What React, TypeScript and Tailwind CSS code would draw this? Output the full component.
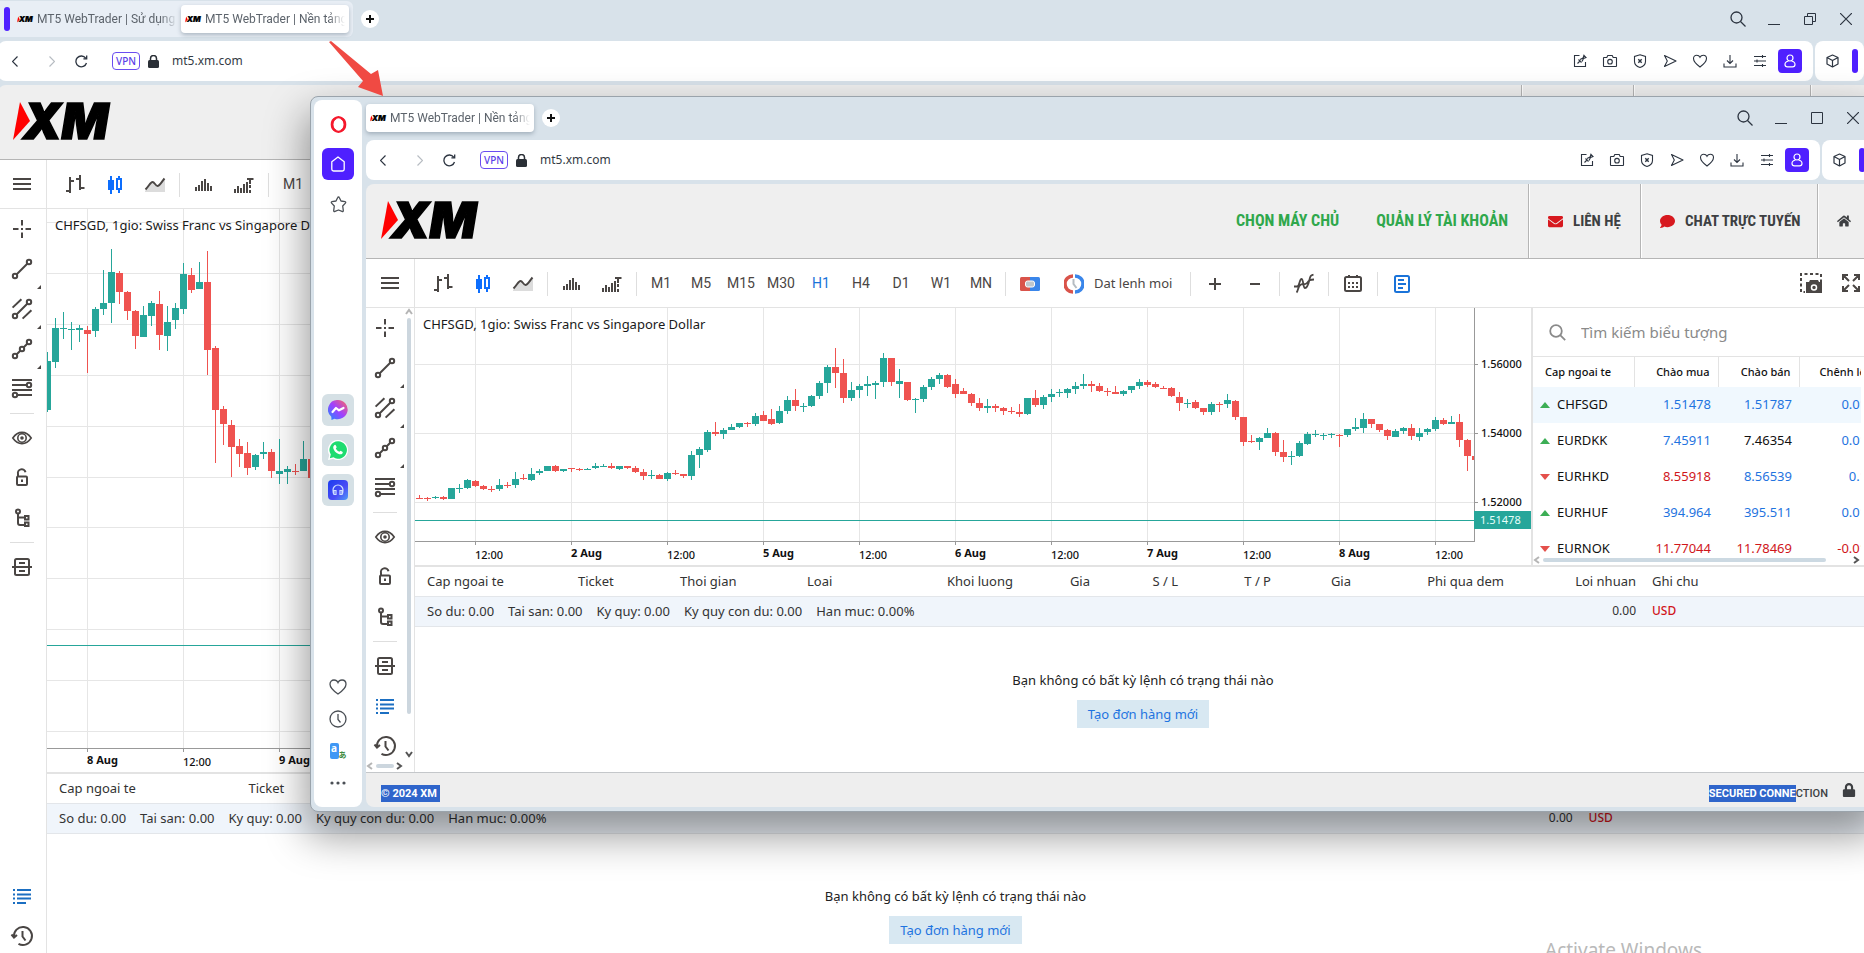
import React from "react";
import { FaEnvelope, FaComment, FaHome, FaLock } from "react-icons/fa";

type Candle = [number, number, number, number, number];

const UP = 1;

/* direction, high, body top, body bottom, low — in thirds of a pixel */
const wideCandles: Candle[] = [
  [0,495,503,507,507],[0,501,503,507,513],[1,497,501,504,507],[0,498,501,507,510],[1,474,474,507,507],[1,462,474,477,489],
  [1,447,450,474,477],[0,450,453,468,471],[0,465,468,477,480],[0,468,477,480,486],[1,447,465,477,483],[0,456,465,468,474],
  [1,426,447,465,474],[0,432,444,447,450],[1,414,432,450,453],[1,417,423,429,435],[1,408,408,423,423],[0,405,408,423,426],
  [1,417,417,423,426],[0,414,414,417,426],[0,414,417,420,423],[1,414,417,420,420],[1,399,408,414,417],[1,402,408,411,411],
  [0,399,408,414,417],[1,408,408,417,420],[0,408,408,414,417],[0,408,414,426,429],[0,417,426,438,450],[1,420,435,438,447],
  [0,432,435,447,447],[1,426,429,447,453],[0,420,429,432,435],[0,432,432,438,444],[1,363,375,438,450],[1,351,357,375,414],
  [1,300,306,360,366],[0,276,306,312,318],[1,294,300,312,327],[1,282,291,300,300],[1,279,279,291,294],[0,276,279,282,291],
  [1,249,258,282,288],[0,243,255,273,273],[0,237,267,282,285],[1,228,243,279,282],[1,198,210,243,252],[0,177,210,228,243],
  [1,219,228,231,246],[1,195,198,228,231],[1,153,159,198,207],[1,105,111,159,189],[0,54,111,129,174],[0,87,129,204,219],
  [1,156,180,204,213],[1,162,168,180,204],[1,138,162,168,198],[1,153,159,165,207],[1,69,84,156,171],[0,84,84,156,168],
  [1,117,153,162,204],[0,156,156,210,213],[1,204,207,210,249],[1,165,171,207,216],[1,141,147,171,180],[1,129,135,147,162],
  [0,132,135,171,174],[0,147,162,192,204],[0,174,183,192,192],[0,189,192,219,228],[0,204,219,234,243],[1,207,228,234,249],
  [0,222,228,234,246],[0,231,234,243,255],[0,231,243,246,252],[0,222,246,252,261],[1,204,204,252,255],[0,180,204,225,231],
  [1,195,201,225,237],[1,177,192,201,216],[1,177,186,189,201],[1,174,177,189,204],[1,156,168,177,192],[1,132,162,168,177],
  [0,153,162,168,186],[0,159,168,183,186],[0,174,183,186,198],[0,168,186,192,192],[1,180,183,192,198],[1,168,168,180,189],
  [1,147,156,168,177],[0,150,156,165,171],[0,156,162,171,174],[0,168,174,177,177],[0,171,174,198,201],[0,186,201,219,243],
  [1,207,219,222,234],[0,210,216,234,237],[0,234,234,246,255],[1,216,222,246,255],[0,216,222,225,246],[1,192,210,222,234],
  [0,210,213,261,270],[0,261,261,336,348],[0,315,333,336,339],[1,321,324,336,360],[1,294,309,324,324],[0,306,309,366,378],
  [0,330,366,381,396],[1,363,378,381,405],[1,333,339,378,381],[1,306,312,342,345],[1,300,312,315,321],[1,309,315,318,330],
  [1,309,312,315,324],[0,312,315,318,351],[1,297,297,315,321],[1,264,291,297,303],[1,249,267,294,309],[0,267,267,282,294],
  [0,282,282,300,306],[0,297,300,318,330],[1,297,303,321,321],[1,291,294,303,312],[0,282,294,318,330],[1,294,309,321,333],
  [1,294,297,306,315],[1,261,270,297,303],[0,264,270,282,285],[1,258,276,282,282],[0,252,276,330,351],[0,327,330,378,423],
  [0,378,378,390,390],
];

const tallCandles: Candle[] = [
  [1,576,603,750,756],[1,474,504,606,624],[1,456,504,507,537],[1,486,507,510,570],[1,495,504,510,546],[0,498,510,522,639],
  [1,441,447,513,531],[1,330,429,447,465],[1,267,336,429,489],[0,333,339,396,432],[0,393,396,453,480],[0,450,453,528,567],
  [1,438,465,531,531],[1,423,429,468,498],[0,393,432,525,570],[1,438,486,528,573],[1,429,444,480,507],[1,309,342,447,462],
  [0,324,345,390,399],[1,306,366,387,387],[0,273,366,570,645],[0,558,564,750,909],[0,738,747,792,855],[0,780,795,861,951],
  [0,837,858,882,921],[0,846,879,924,945],[1,882,885,921,930],[1,846,876,882,897],[0,867,876,933,954],[1,837,933,942,972],
  [1,918,927,936,972],[0,912,933,936,945],[1,843,897,933,933],[0,897,897,954,954],
];

interface ChartSpec {
  candles: Candle[];
  firstX: number;
  offsetY: number;
  gridX: { x: number; label: string }[];
  gridY: { y: number; label?: string }[];
  priceY: number;
  axisY: number;
}

const wideChart: ChartSpec = {
  candles: wideCandles,
  firstX: 4,
  offsetY: 22,
  gridX: ["12:00", "2 Aug", "12:00", "5 Aug", "12:00", "6 Aug", "12:00", "7 Aug", "12:00", "8 Aug", "12:00"].map(
    (label, i) => ({ x: 60 + 96 * i, label })
  ),
  gridY: [
    { y: 56, label: "1.56000" },
    { y: 125, label: "1.54000" },
    { y: 194, label: "1.52000" },
  ],
  priceY: 212,
  axisY: 233,
};

const tallChart: ChartSpec = {
  candles: tallCandles,
  firstX: 0,
  offsetY: -49,
  gridX: ["8 Aug", "12:00", "9 Aug"].map((label, i) => ({ x: 40 + 96 * i, label })),
  gridY: [13, 64, 115, 166, 217, 268, 318, 369, 420, 471, 522].map((y) => ({ y })),
  priceY: 436,
  axisY: 539,
};

function PriceChart({ spec }: { spec: ChartSpec }) {
  const { candles, firstX, offsetY, gridX, gridY, priceY, axisY } = spec;
  return (
    <svg className="block h-full w-full" shapeRendering="crispEdges" role="img" aria-label="CHFSGD">
      {gridX.map(({ x }) => (
        <rect key={x} x={x} y={0} width={1} height={axisY} fill="#e6e6e6" />
      ))}
      {gridY.map(({ y }) => (
        <rect key={y} x={0} y={y} width="100%" height={1} fill="#e6e6e6" />
      ))}
      {candles.map(([dir, high, top, bottom, low], i) => {
        const x = firstX + i * 8;
        const px = (v: number) => Math.round(v / 3) + offsetY;
        return (
          <g key={i} fill={dir === UP ? "#26a69a" : "#ef5350"}>
            <rect x={x} y={px(high)} width={1} height={Math.max(1, px(low) - px(high))} />
            <rect x={x - 3} y={px(top)} width={7} height={Math.max(1, px(bottom) - px(top))} />
          </g>
        );
      })}
      <rect x={0} y={priceY} width="100%" height={1} fill="#26a69a" />
      <svg x="100%" overflow="visible">
        <rect x={-56} y={0} width={56} height={axisY + 30} fill="#fff" />
        <rect x={-57} y={0} width={1} height={axisY} fill="#999" />
        {gridY.map(({ y, label }) =>
          label ? (
            <g key={y}>
              <rect x={-56} y={y} width={3} height={1} fill="#999" />
              <text x={-50} y={y + 4} fontSize={11} fontWeight={500} fill="#111">
                {label}
              </text>
            </g>
          ) : null
        )}
        <rect x={-57} y={priceY - 9} width={57} height={18} fill="#26a69a" />
        <text x={-51} y={priceY + 4} fontSize={11} fill="#e6fffb">
          1.51478
        </text>
      </svg>
      <rect x={0} y={axisY} width="100%" height={1} fill="#999" />
      <svg x="100%" overflow="visible">
        <rect x={-56} y={axisY} width={56} height={1} fill="#fff" />
      </svg>
      {gridX.map(({ x, label }) => (
        <g key={x}>
          <rect x={x} y={axisY} width={1} height={4} fill="#999" />
          <text
            x={x}
            y={label.includes("Aug") ? axisY + 16 : axisY + 18}
            fontSize={11}
            fontWeight={label.includes("Aug") ? 700 : 500}
            fill="#111"
          >
            {label}
          </text>
        </g>
      ))}
      <text x={8} y={21} fontSize={13} fill="#1a1a1a">
        CHFSGD, 1gio: Swiss Franc vs Singapore Dollar
      </text>
    </svg>
  );
}

/* ---------- drawings ---------- */

function Ico({
  children,
  size = 20,
  w = 2,
  c = "#4a4644",
}: {
  children: React.ReactNode;
  size?: number;
  w?: number;
  c?: string;
}) {
  return (
    <svg
      width={size}
      height={size}
      viewBox="0 0 20 20"
      fill="none"
      stroke={c}
      strokeWidth={w}
      overflow="visible"
      className="shrink-0"
    >
      {children}
    </svg>
  );
}

function XmLogo({ small = false }: { small?: boolean }) {
  return (
    <svg
      width={small ? 16 : 98}
      height={small ? 7 : 40}
      viewBox="0 0 98 40"
      overflow="visible"
      className="shrink-0"
      role="img"
      aria-label="XM"
    >
      <polygon points="7,1 17,20 0,39" fill="#ff0000" />
      <text
        x="10"
        y="38"
        fontSize="49"
        fontWeight="900"
        fontStyle="italic"
        fontFamily="Inter, sans-serif"
        fill="#000"
        stroke="#000"
        strokeWidth="1.5"
      >
        XM
      </text>
    </svg>
  );
}

const BLUE = "#1b6fc2";

const toolTop: { name: string; more?: boolean; art: React.ReactNode }[] = [
  {
    name: "Crosshair",
    art: (
      <Ico>
        <path d="M10 1v5.500M10 13.500V19M1 10h5.500M13.500 10H19" />
        <path d="M9 10h2" />
      </Ico>
    ),
  },
  {
    name: "Line",
    more: true,
    art: (
      <Ico>
        <circle cx="3" cy="17" r="2.2" />
        <circle cx="17" cy="3" r="2.2" />
        <path d="M4.5 15.5l11-11" />
      </Ico>
    ),
  },
  {
    name: "Channel",
    more: true,
    art: (
      <Ico>
        <circle cx="3" cy="17" r="2.2" />
        <circle cx="17" cy="3" r="2.2" />
        <path d="M4.5 15.5l11-11M.6 8.6l8.8-8.4M10.6 19.6l8.8-8.4" />
      </Ico>
    ),
  },
  {
    name: "Polyline",
    more: true,
    art: (
      <Ico>
        <circle cx="3" cy="17" r="2.2" />
        <circle cx="10" cy="10" r="2.2" />
        <circle cx="17" cy="3" r="2.2" />
        <path d="M4.5 15.5l4-4M11.5 8.5l4-4" />
      </Ico>
    ),
  },
  {
    name: "Fibonacci",
    art: (
      <Ico>
        <path d="M0 1h20M0 6h15M0 11h20M5 16h15" />
        <circle cx="17" cy="6" r="2.2" />
        <circle cx="3" cy="16" r="2.2" />
      </Ico>
    ),
  },
];

const toolMid: { name: string; art: React.ReactNode }[] = [
  {
    name: "Visibility",
    art: (
      <Ico w={1.6}>
        <path d="M.8 10C4 5.4 7 4.4 10 4.4s6 1 9.2 5.6C16 14.6 13 15.6 10 15.6S4 14.6.8 10z" />
        <circle cx="10" cy="10" r="4.2" />
        <circle cx="10" cy="10" r="1" fill="#4a4644" />
      </Ico>
    ),
  },
  {
    name: "Lock",
    art: (
      <Ico>
        <rect x="5" y="8.5" width="10" height="8.5" rx="1" />
        <path d="M6 8.5V6a3.5 3.5 0 0 1 7.5-1.8M10 11.5v2.5" />
      </Ico>
    ),
  },
  {
    name: "Objects",
    art: (
      <Ico>
        <circle cx="6" cy="3.5" r="2" />
        <path d="M6 5.5V15a2 2 0 0 0 2 2h5M6 9.500h7" />
        <rect x="13" y="8" width="3.5" height="3.5" />
        <rect x="13" y="14.5" width="3.5" height="3.5" />
      </Ico>
    ),
  },
];

const templateArt = (
  <Ico>
    <rect x="3" y="2" width="14" height="16" rx="1.5" />
    <path d="M0 10h20M7 6h6M7 14h6" />
  </Ico>
);

const listArt = (
  <Ico c={BLUE}>
    <path d="M1 4h2M1 8.5h2M1 12.5h2M1 17h2M5 4h14M5 8.5h14M5 12.5h14M5 17h9" />
  </Ico>
);

const historyArt = (
  <Ico>
    <path d="M2 11A9 9 0 1 1 6.5 17.8M10.5 5v5.5l3 4" />
    <path d="M-.5 8.5L2 11.5l3-2.5" />
  </Ico>
);

function ToolButton({ name, more, children }: { name: string; more?: boolean; children: React.ReactNode }) {
  return (
    <button type="button" aria-label={name} className="relative flex h-10 w-[38px] shrink-0 items-center justify-center">
      {children}
      {more && (
        <svg width="4" height="4" viewBox="0 0 4 4" className="absolute right-0 bottom-0">
          <polygon points="4,0 4,4 0,4" fill="#4a4644" />
        </svg>
      )}
    </button>
  );
}

function Rule() {
  return <div className="mx-auto my-1 h-px w-6 shrink-0 bg-[#dedede]" />;
}

function Chevron({ dir, faint = false }: { dir: "up" | "down" | "left" | "right"; faint?: boolean }) {
  const d = { up: "M1 6l3-4 3 4", down: "M1 2l3 4 3-4", left: "M6 1L2 4l4 3", right: "M2 1l4 3-4 3" }[dir];
  return (
    <svg width="8" height="8" viewBox="0 0 8 8" fill="none" stroke={faint ? "#b5b5b5" : "#555"} strokeWidth="2" className="shrink-0">
      <path d={d} />
    </svg>
  );
}

/* ---------- browser chrome ---------- */

function Tab({ title, active = false }: { title: string; active?: boolean }) {
  return (
    <button
      type="button"
      className={
        active
          ? "flex h-7 w-[168px] items-center gap-1 overflow-hidden rounded-[4px] bg-white px-1 shadow-[0_2px_4px_rgba(60,80,100,0.35)]"
          : "flex h-7 w-[168px] items-center gap-1 overflow-hidden px-1"
      }
    >
      <XmLogo small />
      <span className="min-w-0 flex-1 overflow-hidden text-left font-[Roboto,sans-serif] text-[12px] whitespace-nowrap text-[#5c636b] [mask-image:linear-gradient(to_right,black_88%,transparent)]">
        {title}
      </span>
    </button>
  );
}

function ChromeButton({ name, children }: { name: string; children: React.ReactNode }) {
  return (
    <button type="button" aria-label={name} className="flex h-6 w-[30px] items-center justify-center">
      {children}
    </button>
  );
}

function TitleBar({ tabs, maximised }: { tabs: string[]; maximised: boolean }) {
  const ink = "#2c3440";
  return (
    <div className="flex h-[41px] shrink-0 items-center justify-between pb-[3px]">
      <div className="flex items-center">
        {maximised ? (
          <div className="flex h-9 items-center rounded-r-md bg-[#e8eef5] pr-1 pl-1.5">
            <span className="h-6 w-1.5 rounded-full bg-[#4f20ff]" />
            <span className="w-[3px]" />
            {tabs.map((t, i) => (
              <Tab key={t} title={t} active={i === tabs.length - 1} />
            ))}
          </div>
        ) : (
          <Tab title={tabs[0]} active />
        )}
        <button type="button" aria-label="New tab" className="ml-2 flex size-[18px] items-center justify-center rounded-full bg-white">
          <svg width="8" height="8" viewBox="0 0 8 8" stroke="#111" strokeWidth="2">
            <path d="M4 0v8M0 4h8" />
          </svg>
        </button>
      </div>
      <div className="flex">
        <button type="button" aria-label="Search tabs" className="flex h-8 w-9 items-center justify-center">
          <svg width="16" height="16" viewBox="0 0 16 16" fill="none" stroke={ink} strokeWidth="1.3">
            <circle cx="6.5" cy="6.5" r="5.5" />
            <path d="M10.5 10.5l5 5" />
          </svg>
        </button>
        <button type="button" aria-label="Minimise" className="flex h-8 w-9 items-center justify-center">
          <svg width="12" height="12" viewBox="0 0 12 12" fill="none" stroke={ink}>
            <path d="M0 11.5h12" />
          </svg>
        </button>
        <button type="button" aria-label={maximised ? "Restore" : "Maximise"} className="flex h-8 w-9 items-center justify-center">
          <svg width="12" height="12" viewBox="0 0 12 12" fill="none" stroke={ink}>
            {maximised ? <path d="M.5 3.5h8v8h-8zM3.5 3.5v-3h8v8h-3" /> : <path d="M.5 .5h11v11H.5z" />}
          </svg>
        </button>
        <button type="button" aria-label="Close" className="flex h-8 w-9 items-center justify-center">
          <svg width="12" height="12" viewBox="0 0 12 12" fill="none" stroke={ink} strokeWidth="1.2">
            <path d="M0 0l12 12M12 0L0 12" />
          </svg>
        </button>
      </div>
    </div>
  );
}

const addressIcons: { name: string; art: React.ReactNode }[] = [
  { name: "Edit page", art: <path d="M6.500 1.500H1.500v11h11V8M4.500 9.500l3-3M5.500 5.500l3 3M7 5.500L10 4l1-2.500 2 2L10.500 4.500 9 7.500M10.500 1l2.800 2.800" /> },
  {
    name: "Snapshot",
    art: (
      <>
        <path d="M1 3.500h2.800l1-2h4.400l1 2H13q.5 0 .5.5v8q0 .5-.5.5H1q-.5 0-.5-.5V4q0-.5.5-.5z" />
        <circle cx="7" cy="7.700" r="2.300" />
      </>
    ),
  },
  {
    name: "Ad blocker",
    art: (
      <>
        <path d="M7 .8l5.500 1.700v5c0 3-2.500 5-5.500 6-3-1-5.500-3-5.500-6v-5z" />
        <path d="M5.300 5.300l3.400 3.400M8.700 5.300l-3.400 3.400" strokeWidth="1.400" />
      </>
    ),
  },
  { name: "My Flow", art: <path d="M1.500 1.500l11.500 5.500-11.500 5.500 2.800-5.500z" strokeLinejoin="round" /> },
  { name: "Pinboards", art: <path d="M7 13C3 10 .5 7.500.5 4.500.5 2.500 2 1.200 3.700 1.200 5.200 1.200 6.400 2 7 3.300 7.600 2 8.800 1.200 10.300 1.200c1.700 0 3.200 1.300 3.200 3.300C13.500 7.500 11 10 7 13z" /> },
  { name: "Downloads", art: <path d="M7 1v8.500M4 6.500l3 3 3-3M1 9.500V13h12V9.500" /> },
  { name: "Easy setup", art: <path d="M1 2.500h12M1 7h12M1 11.500h12M9.500 1v3M4 5.500v3M9.500 10v3" /> },
];

function AddressBar() {
  return (
    <div className="flex h-10 shrink-0 gap-0.5">
      <div className="flex flex-1 items-center rounded-lg bg-white pr-2 pl-[13px]">
        <button type="button" aria-label="Back" className="flex h-6 w-2 items-center justify-center">
          <svg width="6" height="11" viewBox="0 0 6 11" fill="none" stroke="#2c3440" strokeWidth="1.2">
            <path d="M5.5.5l-5 5 5 5" />
          </svg>
        </button>
        <button type="button" aria-label="Forward" className="ml-[29px] flex h-6 w-2 items-center justify-center">
          <svg width="6" height="11" viewBox="0 0 6 11" fill="none" stroke="#b7bcc2" strokeWidth="1.2">
            <path d="M.5.5l5 5-5 5" />
          </svg>
        </button>
        <button type="button" aria-label="Reload" className="ml-[13px] flex size-6 items-center justify-center">
          <svg width="13" height="13" viewBox="0 0 13 13" fill="none" stroke="#2c3440" strokeWidth="1.3">
            <path d="M11.500 8A5.400 5.400 0 1 1 10.700 3.200M11.700.5v3.300H8.400" />
          </svg>
        </button>
        <span className="ml-[19px] flex h-[18px] w-7 items-center justify-center rounded-[4px] border border-[#6a4df0] text-[10px] font-medium text-[#5b3fe8]">
          VPN
        </span>
        <svg width="11" height="13" viewBox="0 0 11 13" className="ml-2" fill="#2a2f36">
          <rect x="0" y="5" width="11" height="8" rx="1.500" />
          <path d="M2.500 6V3.500a3 3 0 0 1 6 0V6" fill="none" stroke="#2a2f36" strokeWidth="1.5" />
        </svg>
        <label className="ml-[13px] flex min-w-0 flex-1">
          <span className="sr-only">Address</span>
          <input readOnly value="mt5.xm.com" className="min-w-0 flex-1 bg-transparent text-[12px] text-[#343b44] outline-none" />
        </label>
        {addressIcons.map(({ name, art }) => (
          <ChromeButton key={name} name={name}>
            <svg width="14" height="14" viewBox="0 0 14 14" fill="none" stroke="#2c3440" strokeWidth="1.1" overflow="visible">
              {art}
            </svg>
          </ChromeButton>
        ))}
        <ChromeButton name="Profile">
          <span className="flex size-6 items-center justify-center rounded-[4px] bg-[#4f20ff]">
            <svg width="12" height="14" viewBox="0 0 12 14" fill="none" stroke="#fff" strokeWidth="1.2">
              <circle cx="6" cy="4" r="3" />
              <path d="M4.500 7C2 7.500 1 9 1 10.500 1 12 2 12.800 3.500 12.800h5C10 12.800 11 12 11 10.500 11 9 10 7.500 7.500 7" />
            </svg>
          </span>
        </ChromeButton>
      </div>
      <div className="flex w-[49px] items-center justify-between rounded-lg bg-white pr-1.5 pl-[11px]">
        <svg width="13" height="14" viewBox="0 0 13 14" fill="none" stroke="#2c3440" strokeWidth="1.2" strokeLinejoin="round">
          <path d="M6.500 1l5.500 2.500v6.500l-5.500 3-5.500-3V3.500zM1 3.500l5.500 3 5.500-3M6.500 6.500V13" />
        </svg>
        <span className="h-6 w-1.5 rounded-full bg-[#4f20ff]" />
      </div>
    </div>
  );
}

/* ---------- trading page ---------- */

function SiteHeader() {
  const cell = "flex h-full items-center border-l border-[#b5b5b5] text-[15px] text-[#3d3f42] shadow-[inset_1px_0_0_#fff]";
  return (
    <header className="flex h-[75px] shrink-0 items-center justify-between rounded-tl-lg border-b border-[#b5b5b5] bg-[#efefef] pl-[15px]">
      <a href="#home" className="-mt-0.5">
        <XmLogo />
      </a>
      <nav className="flex h-full items-center font-['Liberation_Sans_Narrow','Roboto_Condensed',Roboto,sans-serif] text-[16px] font-bold whitespace-nowrap">
        <a href="#server" className="mr-[37px] text-[#2fa84c]">
          CHỌN MÁY CHỦ
        </a>
        <a href="#account" className="mr-5 text-[#2fa84c]">
          QUẢN LÝ TÀI KHOẢN
        </a>
        <a href="#contact" className={`${cell} w-28 gap-[10px] pl-[19px]`}>
          <FaEnvelope className="size-[15px] text-[#d7191f]" />
          LIÊN HỆ
        </a>
        <a href="#chat" className={`${cell} w-[177px] gap-[10px] pl-[19px]`}>
          <FaComment className="size-[15px] text-[#d7191f]" />
          CHAT TRỰC TUYẾN
        </a>
        <a href="#home" aria-label="Home" className={`${cell} w-[54px] pl-[19px]`}>
          <FaHome className="size-[14px]" />
        </a>
      </nav>
    </header>
  );
}

function BarButton({ name, children }: { name: string; children: React.ReactNode }) {
  return (
    <button type="button" aria-label={name} className="flex h-10 w-10 shrink-0 items-center justify-center">
      {children}
    </button>
  );
}

function BarRule() {
  return <div className="mx-1 h-6 w-px shrink-0 bg-[#dedede]" />;
}

function Toolbar() {
  const frames = ["M1", "M5", "M15", "M30", "H1", "H4", "D1", "W1", "MN"];
  const ink = "#4a4644";
  return (
    <div className="flex h-[49px] shrink-0 items-center border-b border-[#e3e3e3] bg-white">
      <div className="flex h-full w-[49px] shrink-0 items-center border-r border-[#e3e3e3] pl-[15px]">
        <button type="button" aria-label="Menu">
          <svg width="18" height="12" viewBox="0 0 18 12" stroke={ink} strokeWidth="2" className="block">
            <path d="M0 1h18M0 6h18M0 11h18" />
          </svg>
        </button>
      </div>
      <div className="flex flex-1 items-center pt-px pl-2">
        <BarButton name="Bars">
          <Ico>
            <path d="M5 2v16M1 16h4M5 6h4M15 0v15M11 4h4M15 13h4.500" />
          </Ico>
        </BarButton>
        <BarButton name="Candles">
          <Ico c="#0d6efd">
            <path d="M6 1v18M14 1v3M14 14v4" />
            <rect x="3" y="5" width="6" height="10" fill="#0d6efd" stroke="none" />
            <rect x="12" y="4" width="4" height="10" />
          </Ico>
        </BarButton>
        <BarButton name="Area">
          <Ico>
            <path d="M0 16L7 8l5 4 8-8v13H0z" fill="#dcdcdc" stroke="none" />
            <path d="M.5 14.500C4 11 5.500 7 7.500 7s3 4 5 4 4-4 7-7.500" />
          </Ico>
        </BarButton>
        <BarRule />
        <BarButton name="Volumes">
          <Ico>
            <path d="M2 16v-4M5 16v-6M8 16V6M11 16V4M14 16V8M17 16v-5" />
          </Ico>
        </BarButton>
        <BarButton name="Tick volumes">
          <Ico>
            <path d="M1 18v-4M4 18v-7M7 18v-5M10 18V9M13 18V7M16 18v-3M16 13v-3M16 9V4M13 4h6.500" />
          </Ico>
        </BarButton>
        <BarRule />
        {frames.map((f) => (
          <button
            key={f}
            type="button"
            className={
              f === "H1"
                ? "h-10 w-10 shrink-0 text-center font-[Roboto,sans-serif] text-[14px] text-[#1a73d9]"
                : "h-10 w-10 shrink-0 text-center font-[Roboto,sans-serif] text-[14px] text-[#4a4644]"
            }
          >
            {f}
          </button>
        ))}
        <BarRule />
        <BarButton name="One click trading">
          <svg width="20" height="14" viewBox="0 0 20 14">
            <path d="M1.500 0H10v14H1.500Q0 14 0 12.500v-11Q0 0 1.500 0z" fill="#d9534a" />
            <path d="M10 0h8.500Q20 0 20 1.500v11Q20 14 18.500 14H10z" fill="#3a86ea" />
            <rect x="5.500" y="4" width="9" height="6" rx="2" fill="#bfc6cc" stroke="#fff" />
          </svg>
        </BarButton>
        <button type="button" className="flex h-10 w-[136px] shrink-0 items-center gap-[10px] pl-[14px] text-[13px] whitespace-nowrap text-[#4a4644]">
          <svg width="20" height="20" viewBox="0 0 20 20" fill="none" strokeWidth="3.500" className="shrink-0">
            <circle cx="10" cy="10" r="7" fill="#fff" />
            <path d="M9 2A8 8 0 0 0 9 18" stroke="#d9534a" />
            <path d="M11 2a8 8 0 0 1 0 16" stroke="#3a86ea" />
            <path d="M9.500 5v5l3 4" stroke="#b5bcc2" strokeWidth="2" />
          </svg>
          Dat lenh moi
        </button>
        <BarRule />
        <BarButton name="Zoom in">
          <svg width="12" height="12" viewBox="0 0 12 12" stroke={ink} strokeWidth="2">
            <path d="M6 0v12M0 6h12" />
          </svg>
        </BarButton>
        <BarButton name="Zoom out">
          <svg width="10" height="12" viewBox="0 0 10 12" stroke={ink} strokeWidth="2">
            <path d="M0 6h10" />
          </svg>
        </BarButton>
        <BarRule />
        <BarButton name="Indicators">
          <Ico w={1.8}>
            <path d="M0 12.500h3C5.500 12.500 5.500 5 7.500 5s1.500 9 3.500 9 3.500-4 4.500-8.500S17 1.500 19.500.5M2.500 18.500C4.500 17 3.500 12 7 10.500s4 1 6-1.500 3-3.500 7-3.500" />
          </Ico>
        </BarButton>
        <BarRule />
        <BarButton name="Calendar">
          <Ico>
            <rect x="2" y="3" width="16" height="14" rx="1.500" />
            <path d="M6 1v3M14 1v3M5 9h2M9 9h2M13 9h2M5 13h2M9 13h2M13 13h2" />
          </Ico>
        </BarButton>
        <BarRule />
        <BarButton name="Market watch">
          <Ico c="#1a73d9">
            <rect x="3" y="2" width="14" height="16" rx="1.500" />
            <path d="M6 6h6M6 10h8M6 14h5" />
          </Ico>
        </BarButton>
      </div>
      <BarButton name="Save picture">
        <svg width="22" height="20" viewBox="0 0 22 20" fill="none" stroke={ink} strokeWidth="2">
          <path d="M1 3V1h20v8M1 5v14h4" strokeDasharray="3 2.500" />
          <path d="M6 9h3l1-2h8l1 2h3v11H6z" fill={ink} stroke="none" />
          <circle cx="14" cy="14.500" r="2.500" stroke="#fff" strokeWidth="1.500" />
        </svg>
      </BarButton>
      <BarButton name="Full screen">
        <svg width="18" height="18" viewBox="0 0 18 18" fill="none" stroke={ink} strokeWidth="2">
          <path d="M6 1H1v5M1 1l6 6M12 1h5v5M17 1l-6 6M6 17H1v-5M1 17l6-6M12 17h5v-5M17 17l-6-6" />
        </svg>
      </BarButton>
    </div>
  );
}

function ToolColumn({ scrolling }: { scrolling: boolean }) {
  return (
    <aside className="flex w-[49px] shrink-0 flex-col border-r border-[#e3e3e3] bg-white">
      <div className="flex min-h-0 flex-1">
        <div className={scrolling ? "flex w-[38px] flex-col items-center" : "flex w-12 flex-col items-center"}>
          {toolTop.map((t) => (
            <ToolButton key={t.name} name={t.name} more={t.more}>
              {t.art}
            </ToolButton>
          ))}
          <Rule />
          {toolMid.map((t) => (
            <ToolButton key={t.name} name={t.name}>
              {t.art}
            </ToolButton>
          ))}
          <Rule />
          <ToolButton name="Templates">{templateArt}</ToolButton>
          <div className={scrolling ? "flex flex-col" : "mt-auto mb-[41px] flex flex-col"}>
            <ToolButton name="Trade">{listArt}</ToolButton>
            <ToolButton name="History">{historyArt}</ToolButton>
          </div>
        </div>
        {scrolling && (
          <div className="flex w-[10px] flex-col items-center pb-1">
            <Chevron dir="up" faint />
            <div className="mt-0.5 w-1 flex-1 rounded-full bg-[#ccd6de]" />
            <div className="h-9" />
            <Chevron dir="down" />
          </div>
        )}
      </div>
      {scrolling && (
        <div className="flex h-[10px] shrink-0 items-start justify-between pr-[11px]">
          <Chevron dir="left" faint />
          <div className="mt-0.5 h-1 w-[18px] rounded-full bg-[#ccd6de]" />
          <Chevron dir="right" />
        </div>
      )}
    </aside>
  );
}

const quotes = [
  { symbol: "CHFSGD", up: true, bid: "1.51478", bidTone: "b", ask: "1.51787", askTone: "b", change: "0.01%", tone: "b" },
  { symbol: "EURDKK", up: true, bid: "7.45911", bidTone: "b", ask: "7.46354", askTone: "k", change: "0.01%", tone: "b" },
  { symbol: "EURHKD", up: false, bid: "8.55918", bidTone: "r", ask: "8.56539", askTone: "b", change: "0.1%", tone: "b" },
  { symbol: "EURHUF", up: true, bid: "394.964", bidTone: "b", ask: "395.511", askTone: "b", change: "0.01%", tone: "b" },
  { symbol: "EURNOK", up: false, bid: "11.77044", bidTone: "r", ask: "11.78469", askTone: "r", change: "-0.01%", tone: "r" },
];

const tones: Record<string, string> = {
  b: "pr-[7px] text-right text-[#1f74e0]",
  r: "pr-[7px] text-right text-[#d0161b]",
  k: "pr-[7px] text-right text-[#111]",
};

function MarketWatch() {
  return (
    <section className="relative flex w-[340px] shrink-0 flex-col overflow-hidden border-l-2 border-[#e3e3e3] bg-white">
      <label className="flex h-[49px] shrink-0 items-center gap-[15px] border-b border-[#e3e3e3] pl-4">
        <svg width="17" height="17" viewBox="0 0 17 17" fill="none" stroke="#8a8a8a" strokeWidth="1.8" className="shrink-0">
          <circle cx="7" cy="7" r="5.8" />
          <path d="M11.200 11.200l5 5" />
        </svg>
        <input
          type="search"
          aria-label="Tìm kiếm biểu tượng"
          placeholder="Tìm kiếm biểu tượng"
          className="min-w-0 flex-1 bg-transparent text-[15px] outline-none placeholder:text-[#8a8a8a]"
        />
      </label>
      <div className="min-h-0 w-[328px] flex-1 overflow-hidden">
        <table className="w-[352px] table-fixed border-collapse text-[13px]">
          <colgroup>
            <col className="w-[101px]" />
            <col className="w-[84px]" />
            <col className="w-[81px]" />
            <col className="w-[86px]" />
          </colgroup>
          <thead>
            <tr className="h-[30px] text-[11px] text-[#111]">
              <th className="border-r border-[#e3e3e3] pl-3 text-left font-medium whitespace-nowrap">Cap ngoai te</th>
              <th className="border-r border-[#e3e3e3] pr-2 text-right font-medium">Chào mua</th>
              <th className="border-r border-[#e3e3e3] pr-2 text-right font-medium">Chào bán</th>
              <th className="pr-[7px] text-right font-medium">Chênh lệch</th>
            </tr>
          </thead>
          <tbody>
            {quotes.map((q, i) => (
              <tr key={q.symbol} className={i === 0 ? "h-9 bg-[#f0f8fe]" : "h-9"}>
                <td>
                  <span className="flex items-center gap-[7px] pl-[7px] text-[#111]">
                    <svg width="10" height="6" viewBox="0 0 10 6" fill={q.up ? "#3cae55" : "#e4504b"}>
                      <polygon points={q.up ? "0,6 5,0 10,6" : "0,0 10,0 5,6"} />
                    </svg>
                    {q.symbol}
                  </span>
                </td>
                <td className={tones[q.bidTone]}>{q.bid}</td>
                <td className={tones[q.askTone]}>{q.ask}</td>
                <td className={tones[q.tone]}>{q.change}</td>
              </tr>
            ))}
          </tbody>
        </table>
      </div>
      <div className="absolute bottom-px left-0 flex items-center">
        <Chevron dir="left" faint />
        <div className="ml-0.5 h-1 w-[283px] rounded-full bg-[#ccd9e2]" />
        <span className="ml-[26px]">
          <Chevron dir="right" />
        </span>
      </div>
    </section>
  );
}

const tradeColumns: { title: string; share: number; right?: boolean }[] = [
  { title: "Cap ngoai te", share: 155 },
  { title: "Ticket", share: 102 },
  { title: "Thoi gian", share: 127 },
  { title: "Loai", share: 100 },
  { title: "Khoi luong", share: 122, right: true },
  { title: "Gia", share: 77, right: true },
  { title: "S / L", share: 88, right: true },
  { title: "T / P", share: 93, right: true },
  { title: "Gia", share: 80, right: true },
  { title: "Phi qua dem", share: 153, right: true },
  { title: "Loi nhuan", share: 132, right: true },
  { title: "Ghi chu", share: 227 },
];
const totalShare = tradeColumns.reduce((sum, c) => sum + c.share, 0);
const balances = ["So du: 0.00", "Tai san: 0.00", "Ky quy: 0.00", "Ky quy con du: 0.00", "Han muc: 0.00%"];

function TradePanel({ className }: { className: string }) {
  return (
    <section className={`flex shrink-0 flex-col border-t-2 border-[#e3e3e3] bg-white ${className}`}>
      <table className="w-full table-fixed border-collapse text-[#333]">
        <colgroup>
          {tradeColumns.map((c, i) => (
            <col key={i} style={{ width: `${(c.share / totalShare) * 100}%` }} />
          ))}
        </colgroup>
        <thead>
          <tr className="h-[29px] border-b border-[#e3e6ea] text-[13px]">
            {tradeColumns.map((c, i) => (
              <th
                key={i}
                className={
                  c.right
                    ? "px-2 text-right font-normal whitespace-nowrap"
                    : "px-2 text-left font-normal whitespace-nowrap first:pl-3"
                }
              >
                {c.title}
              </th>
            ))}
          </tr>
        </thead>
        <tbody>
          <tr className="h-[30px] border-b border-[#e3e6ea] bg-[#f0f5fb] text-[12px]">
            <td colSpan={10} className="pl-3 text-[13px]">
              <span className="flex gap-[14px] leading-5 whitespace-nowrap">
                {balances.map((b) => (
                  <span key={b}>{b}</span>
                ))}
              </span>
            </td>
            <td className="pr-2 text-right">0.00</td>
            <td className="pl-2 font-medium text-[#d0161b]">USD</td>
          </tr>
        </tbody>
      </table>
      <div className="flex flex-1 flex-col items-center justify-center gap-[10px] text-[13px] leading-5">
        <p className="text-[#222]">Bạn không có bất kỳ lệnh có trạng thái nào</p>
        <button type="button" className="h-7 bg-[#d8e8f2] px-[11px] text-[#1f74e0]">
          Tạo đơn hàng mới
        </button>
      </div>
    </section>
  );
}

function Footer() {
  return (
    <footer className="flex h-[35px] shrink-0 items-center justify-between rounded-bl-lg border-t border-[#c4c7ca] bg-[#eeeeee] pt-1.5 pr-[15px] pl-[15px] font-[Roboto,sans-serif] text-[11px] leading-[17px] text-[#3d3f42]">
      <span className="bg-[#2f65cb] pr-[3px] font-bold text-white">© 2024 XM</span>
      <span className="flex items-center">
        <span className="bg-[#2f65cb] font-bold text-white">SECURED CONNE</span>
        <span className="font-medium">CTION</span>
        <FaLock className="mb-1.5 ml-[14px] size-[14px]" />
      </span>
    </footer>
  );
}

function TradingPage({ front }: { front: boolean }) {
  return (
    <div className="mt-1 flex min-h-0 flex-1 flex-col">
      <SiteHeader />
      <Toolbar />
      <div className="flex min-h-0 flex-1">
        <ToolColumn scrolling={front} />
        <div className="flex min-w-0 flex-1 flex-col">
          <div className="flex min-h-0 flex-1 bg-white">
            <div className="min-w-0 flex-1">
              <PriceChart spec={front ? wideChart : tallChart} />
            </div>
            {front && <MarketWatch />}
          </div>
          <TradePanel className={front ? "h-[207px]" : "h-[225px]"} />
        </div>
      </div>
      {front && <Footer />}
    </div>
  );
}

function SideButton({ name, className = "", children }: { name: string; className?: string; children: React.ReactNode }) {
  return (
    <button type="button" aria-label={name} className={`flex size-8 items-center justify-center rounded-md ${className}`}>
      {children}
    </button>
  );
}

function SideBar() {
  const ink = "#4a4f55";
  return (
    <aside className="mt-px flex w-12 shrink-0 flex-col items-center rounded-lg bg-white py-2">
      <div className="flex flex-col gap-2">
        <SideButton name="Opera">
          <svg width="17" height="17" viewBox="0 0 16 16" fill="none" stroke="#f5182b">
            <ellipse cx="8" cy="8" rx="5.8" ry="6.900" strokeWidth="2" />
            <path d="M5.500 2C.5 4 .5 12 5.500 14M10.500 2c5 2 5 10 0 12" strokeWidth="2.200" />
          </svg>
        </SideButton>
        <SideButton name="Start page" className="bg-[#4f20ff]">
          <svg width="16" height="16" viewBox="0 0 16 16" fill="none" stroke="#fff" strokeWidth="1.3" strokeLinejoin="round">
            <path d="M8 1L1.800 5.800v7.400q0 1.800 1.800 1.800h8.800q1.800 0 1.800-1.800V5.800z" />
          </svg>
        </SideButton>
        <SideButton name="Favourites">
          <svg width="17" height="17" viewBox="0 0 17 17" fill="none" stroke={ink} strokeWidth="1.3" strokeLinejoin="round">
            <path d="M8.500 1q.6 0 .9.700l1.600 3.300 4 .7q1.200.4.400 1.400L12.700 10l.6 4.500q0 1.400-1.300.9L8.500 14 5 15.400q-1.300.5-1.300-.9L4.300 10 1.600 7.100q-.8-1 .4-1.400l4-.7L7.600 1.700Q7.900 1 8.500 1z" />
          </svg>
        </SideButton>
      </div>
      <div className="mt-[174px] flex flex-col gap-2">
        <SideButton name="Messenger" className="bg-[#d5e0e5]">
          <svg width="20" height="20" viewBox="0 0 20 20">
            <defs>
              <linearGradient id="msg" x1="0" y1="1" x2="1" y2="0">
                <stop offset="0" stopColor="#1a8cff" />
                <stop offset="0.5" stopColor="#a040ff" />
                <stop offset="1" stopColor="#ff6a5e" />
              </linearGradient>
            </defs>
            <path d="M10 0a10 9.600 0 1 1-3.500 18.700L3.500 20l-.2-3.200A9.600 9.600 0 0 1 10 0z" fill="url(#msg)" />
            <path d="M4.500 12l3.500-4 3 2.300L15.500 8" fill="none" stroke="#fff" strokeWidth="2.200" strokeLinejoin="round" strokeLinecap="round" />
          </svg>
        </SideButton>
        <SideButton name="WhatsApp" className="bg-[#d5e0e5]">
          <svg width="20" height="20" viewBox="0 0 20 20">
            <path d="M10 0a10 10 0 1 1-4.800 18.700L0 20l1.300-5A10 10 0 0 1 10 0z" fill="#fff" />
            <path d="M10 1.300a8.700 8.700 0 1 1-4.500 16L1.800 18.200l1-3.600A8.700 8.700 0 0 1 10 1.300z" fill="#1edc70" />
            <path d="M6.200 5.300q1-1 1.700.2l.8 1.700-.9 1.300q1 2.200 3.500 3.300l1.200-1 1.900 1q.9.600 0 1.600-1.500 1.600-4.300.3Q6.200 12 5.200 8q-.2-1.600 1-2.700z" fill="#fff" />
          </svg>
        </SideButton>
        <SideButton name="Player" className="bg-[#d5e0e5]">
          <svg width="20" height="20" viewBox="0 0 20 20">
            <defs>
              <linearGradient id="play" x1="0" y1="0" x2="1" y2="1">
                <stop offset="0" stopColor="#1a3cf0" />
                <stop offset="0.6" stopColor="#4a4cf5" />
                <stop offset="1" stopColor="#4f9cf8" />
              </linearGradient>
            </defs>
            <rect width="20" height="20" rx="4" fill="url(#play)" />
            <path d="M6 14.500q-1-1.500-1-4.500a5 5 0 0 1 10 0q0 3-1 4.500M6 10.500h2v4H6zM12 10.500h2v4h-2z" fill="none" stroke="#cfe0ff" strokeWidth="1.200" />
          </svg>
        </SideButton>
      </div>
      <div className="mt-auto flex flex-col">
        <SideButton name="Pinboards">
          <svg width="18" height="16" viewBox="0 0 18 16" fill="none" stroke={ink} strokeWidth="1.3">
            <path d="M9 15C4 11.500 1 8.500 1 5.200 1 2.700 2.800 1 5 1c1.800 0 3.300 1 4 2.600C9.700 2 11.200 1 13 1c2.200 0 4 1.700 4 4.200C17 8.500 14 11.500 9 15z" />
          </svg>
        </SideButton>
        <SideButton name="History">
          <svg width="18" height="18" viewBox="0 0 18 18" fill="none" stroke={ink} strokeWidth="1.3">
            <circle cx="9" cy="9" r="8" />
            <path d="M9 4v5.500l2.500 3" />
          </svg>
        </SideButton>
        <SideButton name="Translate">
          <span className="flex items-end">
            <span className="flex h-4 w-[9px] items-start justify-center rounded-[2px] bg-[#3f97f5] text-[10px] leading-[10px] font-bold text-white">
              a
            </span>
            <span className="font-['Noto_Sans_CJK_JP',sans-serif] text-[8px] leading-[9px] font-bold text-[#3d8b40]">あ</span>
          </span>
        </SideButton>
        <SideButton name="More">
          <svg width="16" height="4" viewBox="0 0 16 4" fill={ink}>
            <circle cx="2" cy="2" r="1.6" />
            <circle cx="8" cy="2" r="1.6" />
            <circle cx="14" cy="2" r="1.6" />
          </svg>
        </SideButton>
      </div>
    </aside>
  );
}

export default function App() {
  return (
    <main className="relative h-screen overflow-hidden bg-[#d8e2ea] font-['Noto_Sans','Open_Sans',sans-serif]">
      <div className="-ml-0.5 flex h-[calc(100vh+44px)] flex-col">
        <TitleBar tabs={["MT5 WebTrader | Sử dụng", "MT5 WebTrader | Nền tảng"]} maximised />
        <AddressBar />
        <TradingPage front={false} />
      </div>

      <div className="absolute right-[162px] bottom-[-11px] text-[19px] leading-7 text-[#b9b9b9]">Activate Windows</div>

      <div className="absolute top-24 right-[-12px] left-[310px] flex h-[716px] gap-1 rounded-lg border border-[#9aa3ab] bg-[#d8e2ea] pt-0.5 pr-1 pb-1 pl-[3px] shadow-[0_20px_40px_4px_rgba(0,0,0,0.4)]">
        <SideBar />
        <div className="flex min-w-0 flex-1 flex-col">
          <TitleBar tabs={["MT5 WebTrader | Nền tảng"]} maximised={false} />
          <AddressBar />
          <TradingPage front />
        </div>
      </div>

      <svg width="56" height="58" viewBox="0 0 56 58" className="absolute top-10 left-[328px]">
        <polygon points="1,2 3,1 43,34 50,30 55,56 30,47 35,41" fill="#f04a43" />
      </svg>
    </main>
  );
}
